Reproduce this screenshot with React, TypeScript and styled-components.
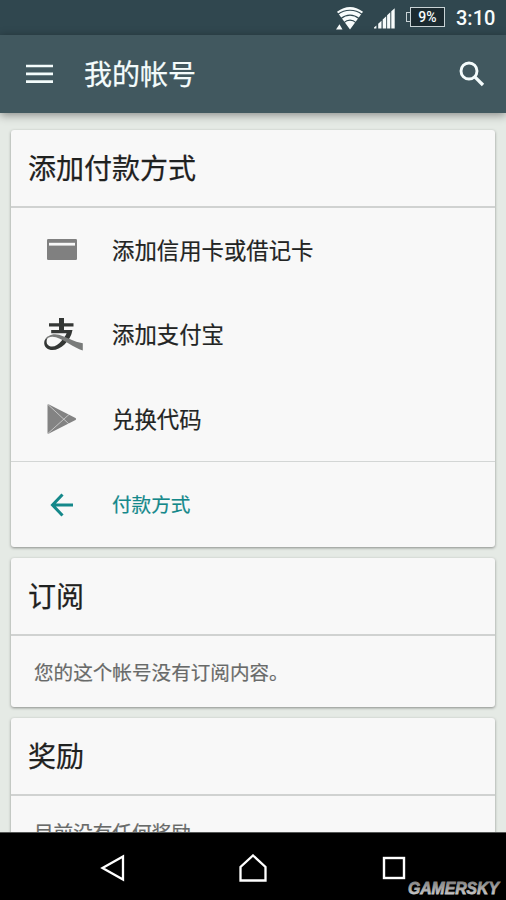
import React from "react";
import styled, { createGlobalStyle } from "styled-components";

const GlobalStyle = createGlobalStyle`
  * { box-sizing: border-box; }
  html, body { margin: 0; padding: 0; background: #e5eae5; }
  body { overflow: hidden; font-family: "Roboto", "Noto Sans CJK SC", sans-serif; }
  svg { display: block; flex: none; }
`;

const Screen = styled.div`
  position: relative;
  display: flex;
  flex-direction: column;
  width: 506px;
  height: 900px;
  overflow: hidden;
  background: #e5eae5;
`;

const StatusBar = styled.header`
  display: flex;
  flex: none;
  align-items: center;
  justify-content: flex-end;
  height: 35px;
  padding: 0 11px 0 0;
  background: #30474f;
  color: #f8fcfc;
`;

const Clock = styled.span`
  width: 39px;
  margin-left: 11px;
  font-size: 20px;
  line-height: 36px;
  font-weight: 500;
  white-space: nowrap;
  padding-top: 1px;
`;

const AppBar = styled.div`
  z-index: 1;
  display: flex;
  flex: none;
  align-items: center;
  height: 78px;
  padding: 0 21px 0 26px;
  background: #41585f;
  box-shadow: 0 2px 9px rgba(0, 0, 0, 0.42);
  color: #f4fcfc;
`;

const PageTitle = styled.h1`
  flex: 1;
  margin: 0 0 0 31px;
  padding-top: 3px;
  font-size: 28px;
  line-height: 40px;
  font-weight: 400;
  -webkit-text-stroke: 0.25px currentColor;
`;

const Content = styled.main`
  display: flex;
  flex: 1;
  flex-direction: column;
  gap: 11px;
  min-height: 0;
  overflow: hidden;
  padding: 17px 11px 0;
`;

const Card = styled.section<{ $height: number }>`
  display: flex;
  flex: none;
  flex-direction: column;
  height: ${(p) => p.$height}px;
  border-radius: 3px;
  background: #f8f8f8;
  box-shadow: 0 1px 3px rgba(0, 0, 0, 0.4);
`;

const CardTitle = styled.h2`
  flex: none;
  height: 78px;
  margin: 0;
  padding: 0 17px;
  border-bottom: 2px solid #d0d2d1;
  color: #1f2120;
  font-size: 28px;
  line-height: 79px;
  font-weight: 400;
  -webkit-text-stroke: 0.25px currentColor;
`;

const Options = styled.div`
  display: grid;
  flex: 1;
  grid-auto-rows: 1fr;
`;

const Option = styled.div<{ $accent?: boolean }>`
  display: flex;
  flex: none;
  align-items: center;
  height: ${(p) => (p.$accent ? "86px" : "auto")};
  padding-bottom: 2px;
  border-top: ${(p) => (p.$accent ? "1px solid #d3d6d5" : "none")};
  color: ${(p) => (p.$accent ? "#14888a" : "#222423")};
  font-size: ${(p) => (p.$accent ? "19.6px" : "22.4px")};
  -webkit-text-stroke: 0.2px currentColor;
`;

const IconSlot = styled.span<{ $drop?: number; $inset?: number }>`
  display: flex;
  flex: none;
  justify-content: center;
  width: 101px;
  padding-top: ${(p) => p.$drop ?? 0}px;
  padding-left: ${(p) => p.$inset ?? 0}px;
`;

const Message = styled.p`
  margin: 0;
  padding: 0 23px;
  color: #686a69;
  font-size: 19.6px;
  line-height: 76px;
  -webkit-text-stroke: 0.2px currentColor;
`;

const NavBar = styled.nav`
  display: grid;
  flex: none;
  grid-template-columns: repeat(3, 140.5px);
  align-items: center;
  justify-items: center;
  justify-content: center;
  height: 68px;
  padding-top: 3px;
  border-top: 1px solid #555756;
  background: #000;
`;

const Watermark = styled.svg`
  position: absolute;
  right: 5px;
  bottom: 3px;
  font-family: "Liberation Sans", Arial, sans-serif;
  font-size: 16.5px;
  font-style: italic;
  font-weight: 700;
`;

const WifiIcon = () => (
  <svg width="28" height="24" viewBox="0 0 28 24">
    <path d="M1 5.8Q14-3.8 27 5.8L14 23.5Z M0 23.5L3.5 18.3L6.5 23.5Z" fill="#f8fcfc" />
    <g fill="none" stroke="#30474f" strokeWidth="1.2">
      <path d="M2 8.2C9 2.9 19 2.9 26 8.2" />
      <path d="M5 12.5C10.5 8 17.5 8 23 12.5" />
      <path d="M8 16.6C11.5 13.2 16.5 13.2 20 16.6" />
    </g>
  </svg>
);

const SignalIcon = () => (
  <svg width="21" height="21" viewBox="0 0 21 21">
    <path d="M0 20.5V19.5L2.4 17.4V20.5Z M4.2 20.5V15.8L7.5 12.8V20.5Z M8.7 20.5V11.4L12.2 8.2V20.5Z M13.1 20.5V7.3L16.3 4.3V20.5Z M17.3 20.5V3.3L20.7.2V20.5Z" fill="#f8fcfc" />
  </svg>
);

const StatusIcon = styled.span<{ $gap: number }>`
  margin-right: ${(p) => p.$gap}px;
  padding-top: 1px;
`;

const Battery = styled.span`
  display: flex;
  align-items: center;
  color: #f8fcfc;
`;

const BatteryTip = styled.span`
  width: 4px;
  height: 10px;
  border: 1px solid #c9d3d6;
  border-right: none;
  margin-top: -1px;
`;

const BatteryBody = styled.span`
  width: 35px;
  height: 20px;
  margin-top: -1px;
  border: 1px solid #c9d3d6;
  background: #1b2a30;
  font-size: 14px;
  line-height: 19px;
  font-weight: 500;
  text-align: center;
`;

const MenuIcon = () => (
  <svg width="27" height="20" viewBox="0 0 27 20">
    <path d="M0 2H27M0 9.8H27M0 17.6H27" stroke="#f4fcfc" strokeWidth="2.7" />
  </svg>
);

const SearchIcon = () => (
  <svg width="26" height="26" viewBox="0 0 26 26" fill="none" stroke="#f4fcfc">
    <circle cx="10" cy="10" r="8" strokeWidth="2.9" />
    <path d="M15.3 15.3L24 24" strokeWidth="3.3" />
  </svg>
);

const CardIcon = () => (
  <svg width="30" height="21" viewBox="0 0 30 21">
    <rect width="30" height="21" rx="1.3" fill="#808080" />
    <path d="M2 5.2H28" stroke="#f8f8f8" strokeWidth="2.8" />
  </svg>
);

const AlipayIcon = () => (
  <svg width="40" height="33" viewBox="0 0 40 33">
    <path d="M5 5.2H15V0H20V5.2H29.5V8.6H20V12H28.5C27.5 18 24.5 22.4 20.5 26.5C15 32 7 34 2.5 30C-1.2 26.4-.4 21.3 4.3 18.3C2.2 22 2 25 4 27C8 30.5 13.5 27.6 17.4 23C20 20 21.8 17.6 22.6 15.3H7.2V12H15V8.6H5Z" fill="#343735" />
    <path d="M.8 22.5C2.8 17.2 9 15 15 16.7C22 18.9 30 23.8 38.8 25.2V32.5C29.5 29.5 20.5 21.8 12 19.2C7.5 17.9 3.8 18.8.8 22.5Z" fill="#797b7a" />
  </svg>
);

const PlayIcon = () => (
  <svg width="30" height="30" viewBox="0 0 30 30">
    <path d="M.5 1Q.5-.2 2 .6L28.5 14Q29.7 15 28.5 16L2 29.4Q.5 30.2.5 29Z" fill="#838383" />
    <path d="M1 .6L22 20M1 29.4L22 10.5" fill="none" stroke="#d6d6d6" strokeWidth=".8" />
  </svg>
);

const BackArrow = () => (
  <svg width="24" height="24" viewBox="0 0 24 24">
    <path d="M23 12H2.5M12.5 1.5L2.5 12L12.5 22.5" fill="none" stroke="#14888a" strokeWidth="3" />
  </svg>
);

const NavBack = () => (
  <svg width="26" height="28" viewBox="0 0 26 28">
    <path d="M23 2.4V25.6L2.5 14Z" fill="none" stroke="#fff" strokeWidth="2.3" />
  </svg>
);

const NavHome = () => (
  <svg width="28" height="28" viewBox="0 0 28 28">
    <path d="M1.5 26.5V13L14 1.5L26.5 13V26.5Z" fill="none" stroke="#fff" strokeWidth="2.3" />
  </svg>
);

const NavRecent = () => (
  <svg width="24" height="24" viewBox="0 0 24 24">
    <rect x="2" y="2" width="20" height="20" fill="none" stroke="#fff" strokeWidth="2.4" />
  </svg>
);

const options = [
  { label: "添加信用卡或借记卡", icon: <CardIcon />, drop: 0, inset: 0 },
  { label: "添加支付宝", icon: <AlipayIcon />, drop: 2, inset: 4 },
  { label: "兑换代码", icon: <PlayIcon />, drop: 2, inset: 0 },
];

export default function App() {
  return (
    <>
      <GlobalStyle />
      <Screen lang="zh-CN">
        <StatusBar>
          <StatusIcon $gap={10}><WifiIcon /></StatusIcon>
          <StatusIcon $gap={11}><SignalIcon /></StatusIcon>
          <Battery>
            <BatteryTip />
            <BatteryBody>9%</BatteryBody>
          </Battery>
          <Clock>3:10</Clock>
        </StatusBar>
        <AppBar>
          <MenuIcon />
          <PageTitle>我的帐号</PageTitle>
          <SearchIcon />
        </AppBar>
        <Content>
          <Card $height={417}>
            <CardTitle>添加付款方式</CardTitle>
            <Options>
              {options.map((o) => (
                <Option key={o.label}>
                  <IconSlot $drop={o.drop} $inset={o.inset}>{o.icon}</IconSlot>
                  {o.label}
                </Option>
              ))}
            </Options>
            <Option $accent>
              <IconSlot $drop={2}><BackArrow /></IconSlot>
              付款方式
            </Option>
          </Card>
          <Card $height={149}>
            <CardTitle>订阅</CardTitle>
            <Message>您的这个帐号没有订阅内容。</Message>
          </Card>
          <Card $height={149}>
            <CardTitle>奖励</CardTitle>
            <Message>目前没有任何奖励</Message>
          </Card>
        </Content>
        <NavBar>
          <NavBack />
          <NavHome />
          <NavRecent />
        </NavBar>
        <Watermark width="94" height="16" viewBox="0 0 94 16">
          <defs>
            <linearGradient id="silver" x1="0" y1="0" x2="0" y2="1">
              <stop offset="0" stopColor="#777" />
              <stop offset="1" stopColor="#d4d4d4" />
            </linearGradient>
          </defs>
          <text x="1" y="13" textLength="91" lengthAdjust="spacingAndGlyphs" fill="url(#silver)" stroke="url(#silver)" strokeWidth=".8">GAMERSKY</text>
        </Watermark>
      </Screen>
    </>
  );
}
